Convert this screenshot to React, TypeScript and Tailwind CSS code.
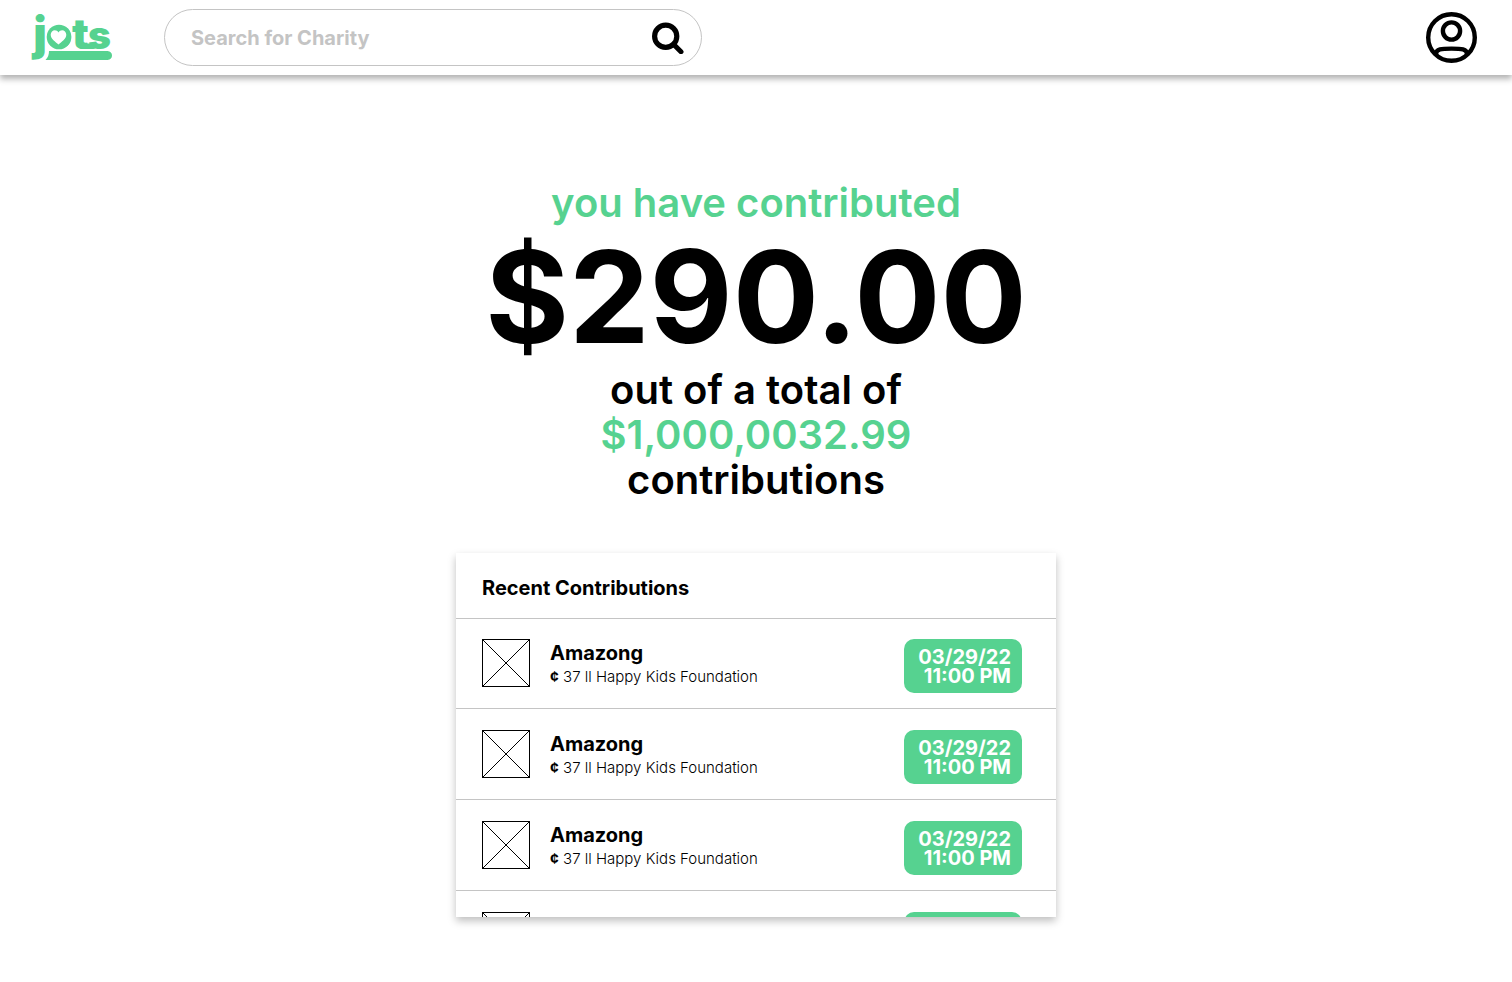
const contributions = [
  { id: 1, name: "Amazong", cents: 37, charity: "Happy Kids Foundation", date: "03/29/22", time: "11:00 PM" },
  { id: 2, name: "Amazong", cents: 37, charity: "Happy Kids Foundation", date: "03/29/22", time: "11:00 PM" },
  { id: 3, name: "Amazong", cents: 37, charity: "Happy Kids Foundation", date: "03/29/22", time: "11:00 PM" },
  { id: 4, name: "Amazong", cents: 37, charity: "Happy Kids Foundation", date: "03/29/22", time: "11:00 PM" },
];

function Logo() {
  return (
    <svg className="block h-[45px] w-20 overflow-visible" viewBox="0 0 80 45" fill="#56d290" aria-label="jots">
      <text fontWeight="900" fontFamily="Inter, sans-serif">
        <tspan x="1.3" y="35" fontSize="46">j</tspan>
        <tspan x="15" y="33" fontSize="40">o</tspan>
        <tspan x="40" y="33.8" fontSize="42">t</tspan>
        <tspan x="56" y="33.6" fontSize="39">s</tspan>
      </text>
      <rect x="48" y="28.5" width="16" height="5.5" rx="2.7" />
      <circle cx="27" cy="22" r="12.3" />
      <path
        d="M26.5 29.6C23.5 26.8 18.7 24 18.7 19.8C18.7 14.8 24.6 13.6 26.5 17.6C28.4 13.6 34.3 14.8 34.3 19.8C34.3 24 29.5 26.8 26.5 29.6Z"
        fill="#fff"
      />
      <path d="M17 36H75.5C81.5 36 81.5 45 75.5 45H13.5C16 42.5 17 39.5 17 36Z" />
    </svg>
  );
}

function SearchIcon() {
  return (
    <svg className="block size-[33px]" viewBox="0 0 33 33" fill="none" stroke="#000" aria-hidden="true">
      <circle cx="14.7" cy="15.3" r="11.1" strokeWidth="5.2" />
      <path d="M22.5 23.2L30 30.7" strokeWidth="5" strokeLinecap="round" />
    </svg>
  );
}

function ProfileIcon() {
  return (
    <svg className="block size-[51px]" viewBox="0 0 51 51" fill="none" stroke="#000" strokeWidth="4.4" aria-hidden="true">
      <circle cx="25.5" cy="25.5" r="23.3" />
      <circle cx="25.5" cy="19" r="8.6" />
      <path d="M10 42C10 37 15.5 36.6 25.5 36.6S41 37 41 42" />
    </svg>
  );
}

function Placeholder() {
  return (
    <svg className="block size-12 shrink-0" viewBox="0 0 48 48" fill="none" stroke="#000" aria-hidden="true">
      <rect x="0.5" y="0.5" width="47" height="47" />
      <path d="M0.5 0.5L47.5 47.5M47.5 0.5L0.5 47.5" />
    </svg>
  );
}

export default function App() {
  return (
    <div className="min-h-screen bg-white font-['Inter',sans-serif] text-black">
      <header className="flex h-[75px] items-center pr-[35px] pl-8 shadow-[0_4px_6px_rgba(0,0,0,0.3)]">
        <a href="#" aria-label="jots home">
          <Logo />
        </a>
        <form
          role="search"
          className="ml-[52px] flex h-[57px] w-full max-w-[538px] items-center rounded-full border border-[#c4c4c4] pr-[17px] pl-[26px]"
        >
          <input
            type="search"
            aria-label="Search for Charity"
            placeholder="Search for Charity"
            className="min-w-0 flex-1 bg-transparent text-[20px] font-bold outline-none placeholder:text-[#c4c4c4]"
          />
          <button type="button" aria-label="Search">
            <SearchIcon />
          </button>
        </form>
        <button type="button" aria-label="Profile" className="ml-auto">
          <ProfileIcon />
        </button>
      </header>

      <main className="flex flex-col items-center px-4 pt-[105px] pb-16">
        <h1 className="flex flex-col items-center text-center text-[40px] leading-[45px] font-semibold">
          <span className="text-[#56d290]">you have contributed</span>
          <span className="pt-0.5 text-[128px] leading-[140px] font-bold">$290.00</span>
          <span>out of a total of</span>
          <span className="text-[#56d290]">$1,000,0032.99</span>
          <span>contributions</span>
        </h1>

        <section className="mt-[51px] h-[364px] w-full max-w-[600px] overflow-y-auto bg-white shadow-[0_4px_8px_rgba(0,0,0,0.25)] [scrollbar-width:none]">
          <h2 className="border-b border-[#c4c4c4] px-[26px] pt-5 pb-[15px] text-[20px] leading-[30px] font-bold">
            Recent Contributions
          </h2>
          <ul className="-mt-px">
            {contributions.map((item) => (
              <li key={item.id} className="flex h-[91px] items-start border-b border-[#c4c4c4] pt-[21px] pr-[34px] pl-[26px]">
                <Placeholder />
                <div className="ml-5 flex-1">
                  <h3 className="text-[20px] leading-[28px] font-bold">{item.name}</h3>
                  <p className="text-[15px] leading-[20px] font-light">
                    <span className="font-bold">¢</span> {item.cents} ll {item.charity}
                  </p>
                </div>
                <p className="flex h-[54px] w-[118px] flex-col items-end justify-center rounded-[10px] bg-[#56d290] pt-0.5 pr-[11px] text-[20px] leading-[19px] font-bold text-white">
                  <span>{item.date}</span>
                  <span>{item.time}</span>
                </p>
              </li>
            ))}
          </ul>
        </section>
      </main>
    </div>
  );
}
